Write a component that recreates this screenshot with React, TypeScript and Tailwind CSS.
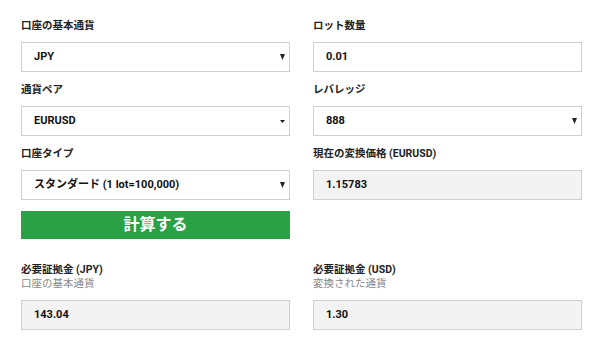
import React from "react";

const font = { fontFamily: 'Roboto, "Noto Sans CJK JP", sans-serif' };

function Arrow({ small }: { small?: boolean }) {
  return small ? (
    <svg width="5" height="3" viewBox="0 0 5 3" className="shrink-0">
      <path d="M0 0 H5 L2.5 3 Z" fill="#222" />
    </svg>
  ) : (
    <svg width="5" height="6" viewBox="0 0 5 6" className="shrink-0">
      <path d="M0 0 H5 L2.5 6 Z" fill="#222" />
    </svg>
  );
}

function Label({ children }: { children: React.ReactNode }) {
  return (
    <div className="h-[20px] flex items-center text-[10.5px] font-bold text-[#222] leading-none">
      {children}
    </div>
  );
}

function Select({ value, small }: { value: React.ReactNode; small?: boolean }) {
  return (
    <div className="mt-[6px] h-[30px] border border-[#cfcfcf] bg-white flex items-center justify-between pl-[12px] pr-[4px] text-[11px] font-bold text-[#111]">
      <span>{value}</span>
      <Arrow small={small} />
    </div>
  );
}

function Input({ value, ro }: { value: string; ro?: boolean }) {
  return (
    <div
      className={`mt-[6px] h-[30px] border border-[#cfcfcf] flex items-center pl-[12px] text-[11px] font-bold text-[#111] ${
        ro ? "bg-[#f3f3f3]" : "bg-white"
      }`}
    >
      {value}
    </div>
  );
}

export default function App() {
  return (
    <div className="w-[593px] h-[350px] bg-white" style={font}>
      <div className="pl-[21px] pt-[16px] grid grid-cols-[269px_269px] gap-x-[23px]">
        <div>
          <Label>口座の基本通貨</Label>
          <Select value="JPY" />
        </div>
        <div>
          <Label>ロット数量</Label>
          <Input value="0.01" />
        </div>
        <div className="mt-[8px]">
          <Label>通貨ペア</Label>
          <Select value="EURUSD" small />
        </div>
        <div className="mt-[8px]">
          <Label>レバレッジ</Label>
          <Select value="888" />
        </div>
        <div className="mt-[8px]">
          <Label>口座タイプ</Label>
          <Select
            value={
              <>
                スタンダード <span className="font-bold">(1 lot=100,000)</span>
              </>
            }
          />
          <div className="mt-[11px] h-[28px] bg-[#2aa145] flex items-center justify-center text-white text-[16px] font-bold">
            計算する
          </div>
        </div>
        <div className="mt-[8px]">
          <Label>
            現在の変換価格&nbsp;<span className="font-bold">(EURUSD)</span>
          </Label>
          <Input value="1.15783" ro />
        </div>
        <div className="mt-[24px]">
          <div className="text-[10.5px] font-bold text-[#222] leading-[14px]">
            必要証拠金 (JPY)
          </div>
          <div className="text-[10.5px] text-[#888] leading-[14px]">口座の基本通貨</div>
          <div className="mt-[9px]">
            <Input value="143.04" ro />
          </div>
        </div>
        <div className="mt-[24px]">
          <div className="text-[10.5px] font-bold text-[#222] leading-[14px]">
            必要証拠金 (USD)
          </div>
          <div className="text-[10.5px] text-[#888] leading-[14px]">変換された通貨</div>
          <div className="mt-[9px]">
            <Input value="1.30" ro />
          </div>
        </div>
      </div>
    </div>
  );
}
